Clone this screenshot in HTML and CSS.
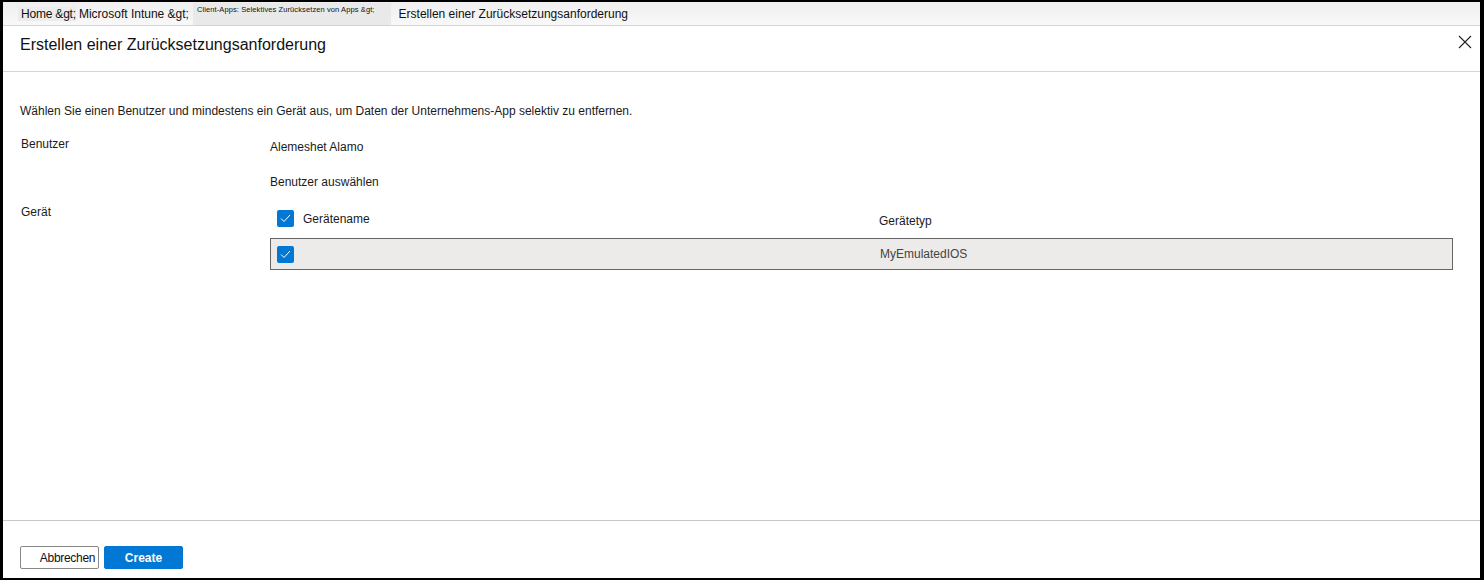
FILE: index.html
```html
<!DOCTYPE html>
<html lang="de">
<head>
<meta charset="UTF-8" />
<title>Erstellen einer Zurücksetzungsanforderung</title>
<link rel="stylesheet" href="styles.css">
</head>
<body>
  <div class="frame">
    <div class="crumbs">
      <span class="crumb home">Home &amp;gt;</span>
      <span class="crumb">Microsoft Intune &amp;gt;</span>
      <span class="crumb small">Client-Apps: Selektives Zurücksetzen von Apps &amp;gt;</span>
      <span class="crumb">Erstellen einer Zurücksetzungsanforderung</span>
    </div>

    <div class="titlebar">
      <h1>Erstellen einer Zurücksetzungsanforderung</h1>
      <button class="close" aria-label="Schließen">
        <svg width="14" height="14" viewBox="0 0 14 14"><path d="M1 1 L13 13 M13 1 L1 13" stroke="#222" stroke-width="1.1" fill="none"/></svg>
      </button>
    </div>

    <div class="content">
      <p class="intro">Wählen Sie einen Benutzer und mindestens ein Gerät aus, um Daten der Unternehmens-App selektiv zu entfernen.</p>

      <div class="field">
        <div class="label">Benutzer</div>
        <div class="value">
          <div class="user">Alemeshet Alamo</div>
          <div class="pick">Benutzer auswählen</div>
        </div>
      </div>

      <div class="field device">
        <div class="label">Gerät</div>
        <div class="value">
          <div class="grid-head">
            <span class="check"><svg width="11" height="9" viewBox="0 0 11 9"><path d="M1 4.5 L4 7.5 L10 1" stroke="#fff" stroke-width="1" fill="none"/></svg></span>
            <span class="col-name">Gerätename</span>
            <span class="col-type">Gerätetyp</span>
          </div>
          <div class="grid-row">
            <span class="check"><svg width="11" height="9" viewBox="0 0 11 9"><path d="M1 4.5 L4 7.5 L10 1" stroke="#fff" stroke-width="1" fill="none"/></svg></span>
            <span class="col-name"></span>
            <span class="col-type">MyEmulatedIOS</span>
          </div>
        </div>
      </div>
    </div>

    <div class="footer">
      <button class="btn">Abbrechen</button>
      <button class="btn primary">Create</button>
    </div>
  </div>
</body>
</html>
```

FILE: styles.css
```css
* {
  box-sizing: border-box;
}
body {
  margin: 0;
  background: #000;
  font-family: "Liberation Sans", Arial, sans-serif;
  color: #1b1b1b;
}

.frame {
  height: 100vh;
  background: #fff;
  border-style: solid;
  border-color: #000;
  border-width: 2px 4px 2px 3px;
  display: flex;
  flex-direction: column;
}

/* breadcrumb bar */
.crumbs {
  height: 24px;
  display: flex;
  align-items: center;
  padding-left: 15px;
  background: linear-gradient(#efefef, #f8f8f8);
  border-bottom: 1px solid #d4d4d4;
  font-size: 12px;
  color: #111;
}
.crumb {
  padding: 0 3px;
}
.crumb.home {
  background: #ececec;
  padding-right: 0;
  letter-spacing: -0.2px;
}
.crumb.small {
  font-size: 7.5px;
  background: #e9e9e9;
  height: 22px;
  display: flex;
  align-items: center;
  margin: 0 5px 0 1px;
  padding: 0 16px 9px 4px;
  align-self: flex-end;
  letter-spacing: 0.1px;
}

.titlebar {
  height: 46px;
  display: flex;
  align-items: flex-start;
  justify-content: space-between;
  padding: 0 4px 0 17px;
  border-bottom: 1px solid #d4d4d4;
}
.titlebar h1 {
  margin: 10px 0 0;
  font-size: 16px;
  line-height: 18px;
  font-weight: 400;
  color: #111;
}
.close {
  border: none;
  background: none;
  padding: 4px;
  margin-top: 5px;
  display: flex;
}

.content {
  flex: 1;
  padding: 31px 0 0 17px;
  font-size: 12px;
}
.intro {
  margin: 0 0 17px;
  line-height: 16px;
}

.field {
  display: grid;
  grid-template-columns: 250px 1fr;
}
.label {
  padding-left: 1px;
  line-height: 16px;
}
.user {
  margin-top: 3px;
  line-height: 16px;
}
.pick {
  margin-top: 19px;
  line-height: 16px;
}
.field.device {
  margin-top: 14px;
}

.grid-head,
.grid-row {
  display: grid;
  grid-template-columns: 33px 569px 1fr;
  align-items: center;
  margin-right: 27px;
}
.grid-head {
  height: 29px;
  padding-left: 7px;
}
.grid-head .col-type {
  margin-top: 5px;
}
.grid-row {
  height: 32px;
  margin-top: 5px;
  padding-left: 7px;
  background: #edebe9;
  border: 1px solid #666;
  color: #444;
}
.grid-row .check {
  margin-left: -1px;
}
.check {
  width: 17px;
  height: 17px;
  border-radius: 2px;
  background: #0078d4;
  display: flex;
  align-items: center;
  justify-content: center;
}
.col-name {
  margin-left: -7px;
}

.footer {
  height: 58px;
  border-top: 1px solid #c8c8c8;
  display: flex;
  align-items: flex-start;
  gap: 5px;
  padding: 25px 0 0 17px;
}
.btn {
  width: 79px;
  height: 23px;
  font-family: inherit;
  font-size: 12px;
  border: 1px solid #8a8886;
  border-radius: 2px;
  background: #fff;
  color: #111;
  padding: 0 0 0 16px;
  letter-spacing: -0.3px;
}
.btn.primary {
  background: #0078d4;
  border-color: #0078d4;
  color: #fff;
  font-weight: 700;
  padding: 0;
  letter-spacing: 0;
}
```
